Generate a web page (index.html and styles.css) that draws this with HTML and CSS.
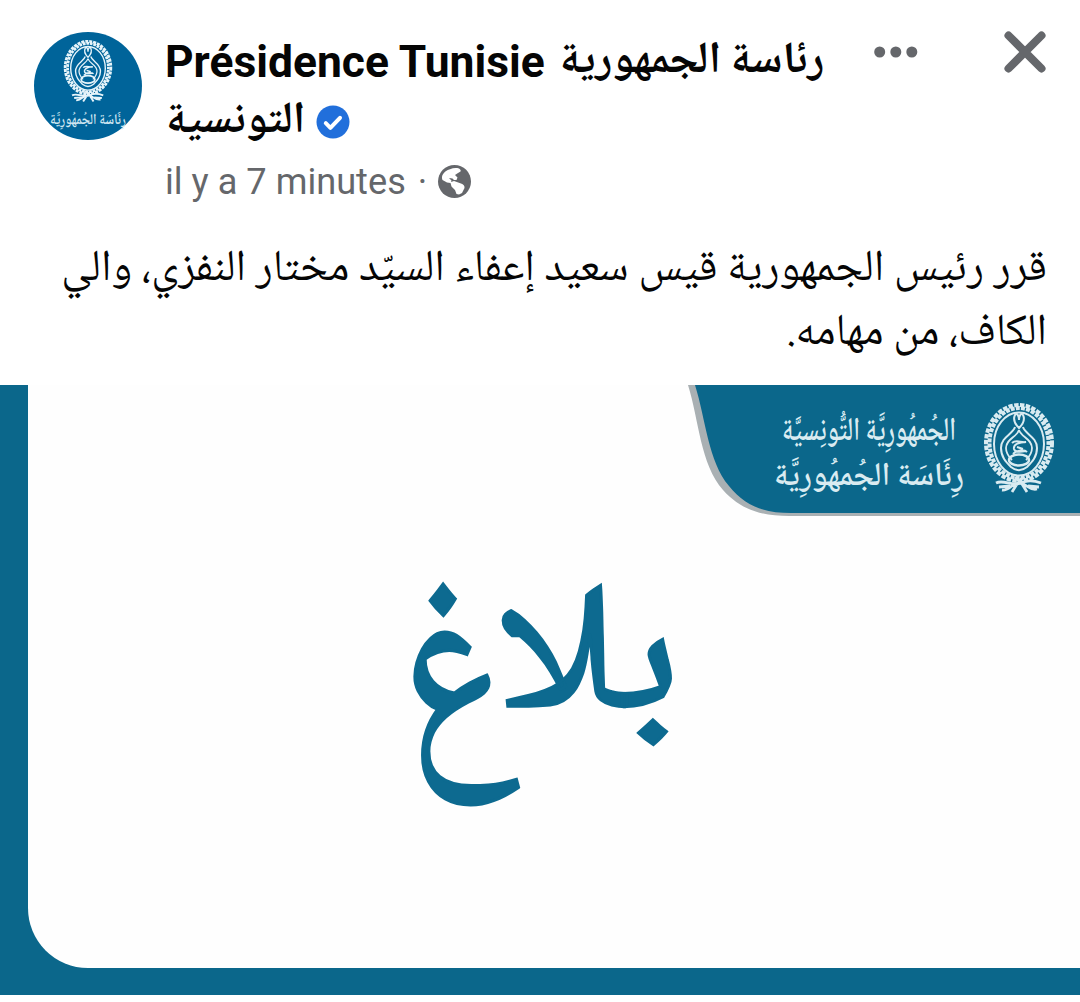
FILE: index.html
```html
<!DOCTYPE html>
<html lang="fr">
<head>
  <meta charset="UTF-8">
  <title>Présidence Tunisie</title>
  <link rel="stylesheet" href="styles.css">
</head>
<body>

  <svg class="sprite">
    <symbol id="emblem" viewBox="0 0 80 104">
      <g fill="none" stroke="currentColor">
        <ellipse cx="40" cy="50" rx="33" ry="38" stroke-width="4" stroke-dasharray="4.4 1.4"/>
        <ellipse cx="40" cy="50" rx="29.5" ry="35" stroke-width="4" stroke-dasharray="4 1.2" stroke-dashoffset="2"/>
        <ellipse cx="40" cy="51" rx="25" ry="31.5" stroke-width="2"/>
        <path d="M40 35c-4-4-6-9-4-13 2-3 4 1 4 5 0-4 2-8 4-5 2 4 0 9-4 13z" stroke-width="2"/>
        <path d="M36 34c-2 7-14 10-14 21 0 9 5 14 10 19 5 4 11 4 16 0 5-5 10-10 10-19 0-11-12-14-14-21" stroke-width="2"/>
        <path d="M40 37c-2 7-13 9-13 18 0 5 3 9 6 12M40 37c2 7 13 9 13 18 0 5-3 9-6 12" stroke-width="1.8"/>
        <path d="M33 50c4-4 9 0 14-1-6 0-13 2-12 7 1 4 7 3 12 2M34 61c4-4 11-5 14-2M38 54l6 2" stroke-width="2"/>
        <ellipse cx="40" cy="67" rx="10" ry="5.5" stroke-width="2.4"/>
        <path d="M36 84l4 4 4-4M17 90c8-4 16 4 25 0 6-3 12-3 20 0M23 97c7 1 10-7 17-7s10 8 18 6M33 99l5-8M48 99l-5-8M20 94l11-1M60 94l-11-1" stroke-width="2.8"/>
      </g>
    </symbol>
  </svg>

  <div class="post">
    <div class="post-header">
      <div class="avatar">
        <svg class="avatar-emblem"><use href="#emblem"/></svg>
        <svg class="avatar-text" viewBox="0 0 80 28"><text x="40" y="17" textLength="76" lengthAdjust="spacingAndGlyphs">رِئَاسَة الجُمهُورِيَّة</text></svg>
      </div>

      <div class="author">
        <div class="name">
          <div class="name-line"><span>Présidence Tunisie</span><span class="name-ar first" dir="rtl">رئاسة الجمهورية</span></div>
          <div class="name-line"><span class="name-ar second" dir="rtl">التونسية</span>
            <svg class="badge" viewBox="0 0 34 34">
              <circle cx="17" cy="17" r="16.5" fill="#216fdb"/>
              <path d="M9.8 18.2l4.6 4.6 9.6-10" fill="none" stroke="#fff" stroke-width="4" stroke-linecap="round" stroke-linejoin="round"/>
            </svg>
          </div>
        </div>
        <div class="meta">
          <span>il y a 7 minutes</span><span class="dot">·</span>
          <svg class="globe" viewBox="0 0 33 33">
            <circle cx="16.5" cy="16.5" r="16.5" fill="#65676b"/>
            <path d="M4.5 10C6 7 9 5 12 4.200c3-1.200 6-1.500 9-.7 1.500 1 2 2 1.500 3L20 8l-3 2 2.500 2.500-1 2.500H16l-1.500-1.500L11 13l2.500 2.500-.5 1.500 3-1 7 2.500c2.500.8 3.800 2.500 3.500 4.500L24 28l-3 1.500-2.500-.5-1.500-4-3.500-3.500-1-3.500-3.500-.5L4.500 15c-.7-1.500-.7-3.500 0-5z" fill="#fff"/>
          </svg>
        </div>
      </div>

      <div class="actions">
        <svg class="more" viewBox="0 0 44 12" fill="#65676b">
          <circle cx="5.7" cy="6" r="5.5"/><circle cx="21.8" cy="6" r="5.5"/><circle cx="37.8" cy="6" r="5.5"/>
        </svg>
        <svg class="close" viewBox="0 0 42 42">
          <path d="M4.5 4.5l33 33M37.5 4.5l-33 33" stroke="#65676b" stroke-width="8" stroke-linecap="round"/>
        </svg>
      </div>
    </div>

    <div class="post-text" dir="rtl">
      <div>قرر رئيس الجمهورية قيس سعيد إعفاء السيّد مختار النفزي، والي</div>
      <div>الكاف، من مهامه.</div>
    </div>

    <div class="poster">
      <div class="panel">
        <svg class="corner" viewBox="0 0 400 140">
          <path d="M8 0C19 35 20 79 43 105c17 19 37 26 66 26h291V0z" fill="#a9b0b3"/>
          <path d="M15 0c11 35 13 76 34 101 16 20 35 27 62 27h289V0z" fill="#0b678b"/>
          <g class="corner-text">
            <text x="189" y="55" textLength="174" lengthAdjust="spacingAndGlyphs">الجُمهُورِيَّة التُّونِسيَّة</text>
            <text x="189" y="100" textLength="190" lengthAdjust="spacingAndGlyphs">رِئَاسَة الجُمهُورِيَّة</text>
          </g>
          <use href="#emblem" x="299" y="8" width="80" height="104" class="corner-emblem"/>
        </svg>
        <svg class="headline" viewBox="0 0 280 260">
          <text x="86" y="136" textLength="185" lengthAdjust="spacingAndGlyphs" transform="scale(1 1.01)">بلا</text>
          <text x="-9" y="132" textLength="113" lengthAdjust="spacingAndGlyphs" transform="scale(1 1.28)">غ</text>
        </svg>
      </div>
    </div>
  </div>

</body>
</html>
```

FILE: styles.css
```css
:root {
  --blue: #0b678b;
  --grey: #65676b;
  --arabic: "Noto Naskh Arabic", "Noto Sans Arabic", "DejaVu Sans", sans-serif;
}

* {
  box-sizing: border-box;
}

body {
  margin: 0;
  background: #fff;
  color: #050505;
  font-family: Roboto, "DejaVu Sans", sans-serif;
}

.sprite {
  display: none;
}

.post {
  width: 1080px;
  height: 1002px;
  overflow: hidden;
}

.post-header {
  display: flex;
  height: 226px;
  padding: 31px 34px 0;
}

.avatar {
  width: 108px;
  height: 108px;
  border-radius: 50%;
  background: #00649a;
  color: #e6f4fa;
  display: flex;
  flex-direction: column;
  align-items: center;
  margin-top: 1px;
}

.avatar-emblem {
  width: 56px;
  height: 72px;
  margin-top: 1px;
}

.avatar-text {
  width: 80px;
  height: 28px;
  margin-top: 2px;
  overflow: visible;
  font: 600 15px var(--arabic);
  fill: #cfe6f1;
  text-anchor: middle;
}

.author {
  margin-left: 23px;
  width: 701px;
}

.name-line {
  display: flex;
  align-items: center;
  height: 60px;
  padding-top: 2px;
  font-size: 44.4px;
  font-weight: 700;
  white-space: nowrap;
}

.name-ar {
  font-family: var(--arabic);
  font-size: 44.3px;
}

.first {
  margin-left: 15px;
}

.second {
  margin-left: 1px;
}

.badge {
  width: 34px;
  height: 34px;
  margin-left: 11px;
}

.meta {
  display: flex;
  align-items: center;
  height: 60px;
  padding-top: 1px;
  font-size: 36.2px;
  color: var(--grey);
}

.dot {
  margin: 0 11px 0 12px;
}

.globe {
  width: 33px;
  height: 33px;
}

.actions {
  display: flex;
  margin-left: 8px;
}

.more {
  width: 44px;
  height: 12px;
  margin-top: 15px;
}

.close {
  width: 42px;
  height: 42px;
  margin-left: 86px;
}

.post-text {
  height: 159px;
  padding: 13px 33px 0;
  font-family: var(--arabic);
  font-size: 44.1px;
  line-height: 64px;
  white-space: nowrap;
}

.poster {
  height: 610px;
  background: var(--blue);
  padding: 0 0 27px 28px;
}

.panel {
  position: relative;
  height: 583px;
  background: #fefefe;
  border-bottom-left-radius: 60px;
}

.corner {
  position: absolute;
  top: 0;
  right: 0;
  width: 400px;
  height: 140px;
}

.corner-text {
  font: 600 33px var(--arabic);
  fill: #d9ebf1;
  text-anchor: middle;
}

.corner-emblem {
  color: #d9ebf1;
}

.headline {
  position: absolute;
  left: 382px;
  top: 185px;
  width: 280px;
  height: 260px;
  overflow: visible;
  font: 180px var(--arabic);
  fill: #0d6a90;
  stroke: #0d6a90;
  stroke-width: 2.5px;
}
```
